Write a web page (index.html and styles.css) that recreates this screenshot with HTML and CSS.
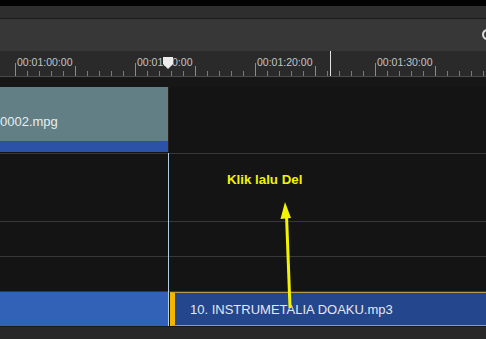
FILE: index.html
```html
<!DOCTYPE html>
<html>
<head>
	<meta charset="utf-8">
	<title>Timeline</title>
	<link rel="stylesheet" href="styles.css">
</head>
<body>
	<div class="editor">
		<div class="topbar"></div>
		<div class="header"></div>
		<div class="toolbar"><span class="ring"></span></div>

		<div class="ruler">
			<div class="seg"><span>00:01:00:00</span></div>
			<div class="seg"><span>00:01:10:00</span></div>
			<div class="seg"><span>00:01:20:00</span></div>
			<div class="seg"><span>00:01:30:00</span></div>
			<div class="seg"></div>
			<div class="cursor-line"></div>
			<svg class="marker" width="11" height="12" viewBox="0 0 11 12">
				<path d="M0 0H10V7L5 12L0 7Z" fill="#ececec"/>
			</svg>
		</div>
		<div class="gap"></div>

		<div class="tracks">
			<div class="track video">
				<div class="clip-video">
					<div class="clip-thumb"><span class="clip-name">0002.mpg</span></div>
					<div class="clip-bar"></div>
				</div>
			</div>
			<div class="track tall"></div>
			<div class="track short"></div>
			<div class="track short"></div>
			<div class="track audio">
				<div class="audio-prev"></div>
				<div class="audio-clip">10. INSTRUMETALIA DOAKU.mp3</div>
			</div>

			<!-- playhead + annotation lie over the tracks -->
			<div class="playhead"></div>
			<div class="note">Klik lalu Del</div>
			<svg class="arrow" width="486" height="239" viewBox="0 0 486 239">
				<line x1="286.5" y1="128" x2="290" y2="221" stroke="#f4f400" stroke-width="3"/>
				<polygon points="285,115 280.5,132 291,131" fill="#f4f400"/>
			</svg>
		</div>

		<div class="bottom"></div>
	</div>
</body>
</html>
```

FILE: styles.css
```css
body {
	margin: 0;
	background: #141414;
	font-family: "Liberation Sans", Arial, sans-serif;
	overflow: hidden;
}

.editor {
	width: 486px;
	height: 339px;
	display: flex;
	flex-direction: column;
	overflow: hidden;
}

.topbar {
	height: 6px;
	background: #020202;
}

.header {
	height: 12px;
	background: #2e2e2e;
	border-bottom: 1px solid #1c1c1c;
}

.toolbar {
	height: 32px;
	background: #373737;
	display: flex;
	align-items: center;
	padding-left: 482px;
	overflow: hidden;
}

.ring {
	flex: none;
	width: 7px;
	height: 7px;
	border: 2px solid #dcdcdc;
	border-radius: 50%;
	margin-top: -1px;
}

/* ruler */
.ruler {
	position: relative;
	height: 25px;
	background: #2a2a2a;
	border-bottom: 1px solid #4b4b4b;
	display: flex;
	padding-left: 15px;
	overflow: hidden;
}

.seg {
	flex: 0 0 120px;
	padding: 1px 0 0 2px;
	box-sizing: border-box;
	background:
		linear-gradient(#8c8c8c, #8c8c8c) 0 100% / 1px 13px no-repeat,
		linear-gradient(#8c8c8c, #8c8c8c) 60px 100% / 1px 10px no-repeat,
		repeating-linear-gradient(to right, #7c7c7c 0 1px, transparent 1px 12px) 0 100% / 100% 5px no-repeat;
}

.seg span {
	font-size: 10.5px;
	line-height: 12px;
	color: #c4c4c4;
}

.cursor-line {
	position: absolute;
	left: 330px;
	top: 0;
	bottom: 0;
	width: 1px;
	background: #e2e2e2;
}

.marker {
	position: absolute;
	left: 163px;
	top: 6px;
}

.gap {
	height: 10px;
	background: #171717;
}

/* tracks */
.tracks {
	position: relative;
	display: flex;
	flex-direction: column;
}

.track {
	background: #141414;
	border-bottom: 1px solid #383838;
	display: flex;
}

.video {
	height: 66px;
}

.tall {
	height: 67px;
}

.short {
	height: 34px;
}

.clip-video {
	width: 168px;
	height: 65px;
	border-right: 1px solid #2a211c;
	display: flex;
	flex-direction: column;
}

.clip-thumb {
	height: 54px;
	background: #627f86;
	display: flex;
	align-items: center;
	overflow: hidden;
}

.clip-name {
	margin: 14px 0 0 0;
	font-size: 13px;
	color: #e6eef0;
}

.clip-bar {
	height: 11px;
	background: #2c52a8;
}

.audio {
	height: 34px;
	border-bottom: 0;
}

.audio-prev {
	width: 168px;
	background: #3262b7;
	margin-right: 2px;
}

.audio-clip {
	flex: 1;
	background: #24468c;
	border-left: 5px solid #f6b600;
	border-top: 1px solid #b39c52;
	border-bottom: 1px solid #b39c52;
	padding-left: 15px;
	display: flex;
	align-items: center;
	font-size: 13px;
	color: #e4e8f0;
	white-space: nowrap;
}

.playhead {
	position: absolute;
	left: 168px;
	top: 66px;
	bottom: 0;
	width: 1px;
	background: #b4cde6;
}

.note {
	position: absolute;
	left: 227px;
	top: 85px;
	font-size: 13.3px;
	font-weight: bold;
	color: #f2f200;
}

.arrow {
	position: absolute;
	left: 0;
	top: 0;
}

.bottom {
	flex: 1;
	background: #282828;
	border-top: 1px solid #1a1a1a;
}
```
